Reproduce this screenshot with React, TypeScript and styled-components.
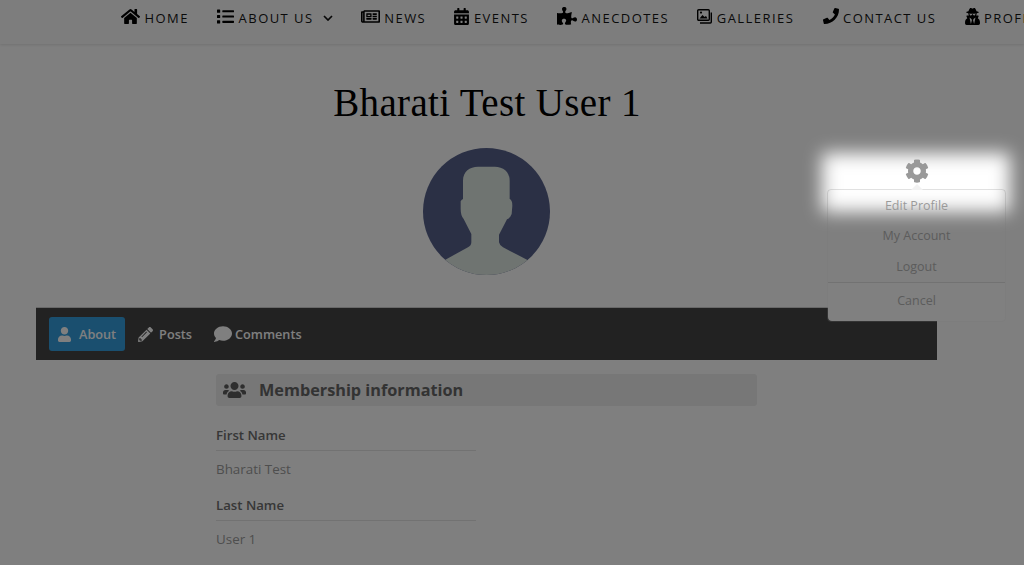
import React from 'react';
import styled, { createGlobalStyle } from 'styled-components';
import {
  FaHome, FaList, FaRegNewspaper, FaCalendarAlt, FaPuzzlePiece, FaPhone,
  FaUserSecret, FaCog, FaUser, FaPencilAlt, FaComment, FaUsers,
} from 'react-icons/fa';

const GlobalStyle = createGlobalStyle`
  html, body {
    margin: 0;
    padding: 0;
    background: #fff;
    font-family: "Open Sans", "Liberation Sans", sans-serif;
  }
`;

const Page = styled.div`
  position: relative;
  width: 1024px;
  height: 565px;
  overflow: hidden;
  background: #fff;
`;

const Nav = styled.nav`
  display: flex;
  align-items: center;
  box-sizing: border-box;
  height: 44px;
  padding: 0 0 9px 121px;
  gap: 28.2px;
  background: #fafafa;
  box-shadow: 0 1px 3px rgba(0, 0, 0, 0.12);
  white-space: nowrap;
  overflow: hidden;
`;

const NavItem = styled.a<{ $w: number; $h: number }>`
  display: flex;
  align-items: center;
  gap: 4.5px;
  flex: none;
  font-size: 13px;
  font-weight: 500;
  letter-spacing: 1.45px;
  text-transform: uppercase;
  color: #141414;
  & > svg:first-child {
    flex: none;
    width: ${p => p.$w}px;
    height: ${p => p.$h}px;
    color: #000;
    margin-top: -3px;
  }
`;

const Caret = styled.svg`
  flex: none;
  width: 10px;
  height: 6px;
  margin: 1px 0 0 4.5px;
  fill: none;
  stroke: #111;
  stroke-width: 1.7;
`;

const Main = styled.main`
  width: 901px;
  margin-left: 36px;
`;

const Title = styled.h1`
  margin: 36px 0 0;
  height: 46px;
  padding-left: 1px;
  font-family: "Liberation Serif", serif;
  font-weight: 400;
  font-size: 39px;
  line-height: 46px;
  letter-spacing: 0.35px;
  text-align: center;
  color: #000;
`;

const AvatarWrap = styled.div`
  display: flex;
  justify-content: center;
  margin-top: 22px;
  height: 127px;
`;

const TabBar = styled.div`
  display: flex;
  align-items: center;
  gap: 4px;
  height: 53px;
  margin-top: 32px;
  padding-left: 13px;
  background: #444;
  border-top: 1px solid #d0d0d0;
  box-sizing: border-box;
`;

const Tab = styled.a<{ $active?: boolean; $gap: number; $w: number; $h: number }>`
  display: flex;
  align-items: center;
  gap: ${p => p.$gap}px;
  height: 34px;
  padding: 0 9px;
  border-radius: 3px;
  font-size: 12.7px;
  font-weight: 600;
  color: #fff;
  background: ${p => (p.$active ? '#349fdf' : 'transparent')};
  svg {
    flex: none;
    width: ${p => p.$w}px;
    height: ${p => p.$h}px;
  }
`;

const Content = styled.section`
  width: 541px;
  margin: 14px 0 0 180px;
`;

const SectionHead = styled.h2`
  display: flex;
  align-items: center;
  gap: 13px;
  height: 32px;
  margin: 0 0 20px;
  padding-left: 7px;
  border-radius: 3px;
  background: #eee;
  font-size: 16.25px;
  font-weight: 700;
  color: #666;
  svg {
    flex: none;
    width: 23px;
    height: 20px;
    color: #5c5c5c;
  }
`;

const Label = styled.div`
  width: 260px;
  padding-bottom: 5px;
  border-bottom: 1px solid #e4e4e4;
  margin-bottom: 8px;
  font-size: 13.2px;
  line-height: 19px;
  font-weight: 600;
  color: #6e6e6e;
`;

const Value = styled.div`
  margin-bottom: 17px;
  font-size: 13.4px;
  line-height: 20px;
  color: #9c9c9c;
`;

const Dim = styled.div`
  position: absolute;
  inset: 0;
  z-index: 10;
  background: rgba(0, 0, 0, 0.5);
`;

const Glow = styled.div`
  position: absolute;
  z-index: 11;
  left: 822px;
  top: 153px;
  width: 188px;
  height: 59px;
  background: #fff;
  filter: blur(9px);
`;

const GearButton = styled.div`
  position: absolute;
  z-index: 13;
  left: 905px;
  top: 159px;
  display: flex;
  font-size: 24px;
  color: #999;
`;

const Popover = styled.div`
  position: absolute;
  z-index: 12;
  left: 827px;
  top: 189px;
  width: 179px;
  box-sizing: border-box;
  border: 1px solid rgba(120, 120, 120, 0.22);
  border-radius: 4px;
  &::before {
    content: '';
    position: absolute;
    left: 83px;
    top: -6px;
    border: 6px solid transparent;
    border-top: 0;
    border-bottom-color: #f2f2f2;
  }
`;

const MenuItem = styled.div<{ $lit?: boolean }>`
  height: ${p => (p.$lit ? '30px' : '31px')};
  font-size: 12.5px;
  line-height: 31px;
  text-align: center;
  color: ${p => (p.$lit ? '#9a9a9a' : '#5c5c5c')};
`;

const CancelItem = styled(MenuItem)`
  height: 38px;
  line-height: 35px;
  background: #808080;
  border-top: 1px solid #727272;
  border-radius: 0 0 4px 4px;
`;

const Avatar = () => (
  <svg width="127" height="127" viewBox="0 0 381 381">
    <defs>
      <clipPath id="avatar-circle">
        <circle cx="190.5" cy="190.5" r="190.5" />
      </clipPath>
    </defs>
    <circle cx="190.5" cy="190.5" r="190.5" fill="#57618b" />
    <path
      clipPath="url(#avatar-circle)"
      fill="#dfe8e3"
      d="M120 98 C120 70 140 56 165 56 L215 56 C240 56 260 70 260 98 L260 153 Q268 156 268 173 L266 198 Q262 210 252 214 L228 260 L228 283 Q230 293 240 298 L312 335 L312 381 L67 381 L67 335 L135 298 Q145 293 145 283 L145 258 L122 213 Q113 203 113 183 L113 160 Q115 156 120 153 Z"
    />
  </svg>
);

const GalleryIcon = () => (
  <svg viewBox="0 0 15 15" fill="none" stroke="currentColor" strokeWidth="1.4">
    <rect x="0.7" y="0.7" width="11.6" height="10.6" rx="1" />
    <path d="M14.3 3.5 V13 a1 1 0 0 1 -1 1 H3" />
    <path d="M2.5 9.5 L5.5 6 L7.5 8 L9 7 L10.5 9.5 Z" fill="currentColor" stroke="none" />
    <circle cx="4" cy="3.6" r="1.1" fill="currentColor" stroke="none" />
  </svg>
);

export default function App() {
  return (
    <Page>
      <GlobalStyle />
      <Nav>
        <NavItem $w={19} $h={17}><FaHome />Home</NavItem>
        <NavItem $w={17} $h={17}>
          <FaList />About us
          <Caret viewBox="0 0 10 6"><path d="M1 1 L5 5 L9 1" /></Caret>
        </NavItem>
        <NavItem $w={19} $h={17}><FaRegNewspaper />News</NavItem>
        <NavItem $w={15} $h={17}><FaCalendarAlt />Events</NavItem>
        <NavItem $w={20} $h={18}><FaPuzzlePiece />Anecdotes</NavItem>
        <NavItem $w={15} $h={15}><GalleryIcon />Galleries</NavItem>
        <NavItem $w={16} $h={16}><FaPhone />Contact us</NavItem>
        <NavItem $w={15} $h={17}><FaUserSecret />Profile</NavItem>
      </Nav>
      <Main>
        <Title>Bharati Test User 1</Title>
        <AvatarWrap><Avatar /></AvatarWrap>
        <TabBar>
          <Tab $active $gap={8} $w={13} $h={15}><FaUser />About</Tab>
          <Tab $gap={6} $w={15} $h={15}><FaPencilAlt />Posts</Tab>
          <Tab $gap={3} $w={18} $h={18}><FaComment />Comments</Tab>
        </TabBar>
        <Content>
          <SectionHead><FaUsers />Membership information</SectionHead>
          <Label>First Name</Label>
          <Value>Bharati Test</Value>
          <Label>Last Name</Label>
          <Value>User 1</Value>
        </Content>
      </Main>
      <Dim />
      <Glow />
      <GearButton><FaCog /></GearButton>
      <Popover>
        <MenuItem $lit>Edit Profile</MenuItem>
        <MenuItem>My Account</MenuItem>
        <MenuItem>Logout</MenuItem>
        <CancelItem>Cancel</CancelItem>
      </Popover>
    </Page>
  );
}
